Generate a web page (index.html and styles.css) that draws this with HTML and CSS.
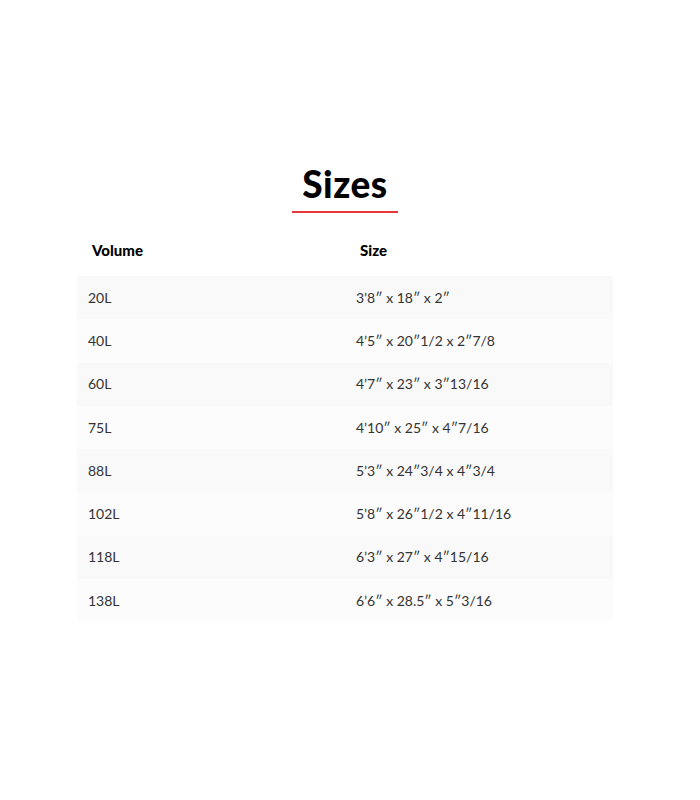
FILE: index.html
```html
<!DOCTYPE html>
<html lang="en">
<head>
<meta charset="utf-8">
<title>Sizes</title>
<link rel="stylesheet" href="styles.css">
</head>
<body>
<section class="sizes">
  <h2 class="sizes-title">Sizes</h2>
  <div class="sizes-rule"></div>
  <table class="sizes-table">
    <thead>
      <tr><th>Volume</th><th>Size</th></tr>
    </thead>
    <tbody>
      <tr><td>20L</td><td>3’8″ x 18″ x 2″</td></tr>
      <tr><td>40L</td><td>4’5″ x 20″1/2 x 2″7/8</td></tr>
      <tr><td>60L</td><td>4’7″ x 23″ x 3″13/16</td></tr>
      <tr><td>75L</td><td>4’10″ x 25″ x 4″7/16</td></tr>
      <tr><td>88L</td><td>5’3″ x 24″3/4 x 4″3/4</td></tr>
      <tr><td>102L</td><td>5’8″ x 26″1/2 x 4″11/16</td></tr>
      <tr><td>118L</td><td>6’3″ x 27″ x 4″15/16</td></tr>
      <tr><td>138L</td><td>6’6″ x 28.5″ x 5″3/16</td></tr>
    </tbody>
  </table>
</section>
</body>
</html>
```

FILE: styles.css
```css
html, body {
  margin: 0;
  padding: 0;
  background: #ffffff;
}
body {
  font-family: Lato, "Liberation Sans", sans-serif;
  color: #222;
}
.sizes {
  width: 536px;
  margin: 0 0 0 77px;
  padding-top: 162px;
  display: flex;
  flex-direction: column;
  align-items: center;
}
.sizes-title {
  margin: 0;
  font-size: 37px;
  line-height: 44px;
  font-weight: 900;
  color: #000;
  letter-spacing: 0.5px;
}
.sizes-rule {
  width: 106px;
  height: 2px;
  background: #e8383d;
  margin-top: 5px;
}
.sizes-table {
  width: 536px;
  border-collapse: collapse;
  margin-top: 15px;
  table-layout: fixed;
}
.sizes-table th {
  text-align: left;
  font-weight: 900;
  font-size: 15px;
  color: #000;
  padding: 12px 0 16px 15px;
  height: 20px;
  line-height: 20px;
}
.sizes-table td {
  font-size: 14px;
  color: #333;
  padding: 0 0 0 11px;
  height: 43.3px;
  line-height: 20px;
}
.sizes-table tbody tr:nth-child(odd) {
  background: #f9f9f9;
}
.sizes-table tbody tr:nth-child(even) {
  background: #fcfcfc;
}
```
